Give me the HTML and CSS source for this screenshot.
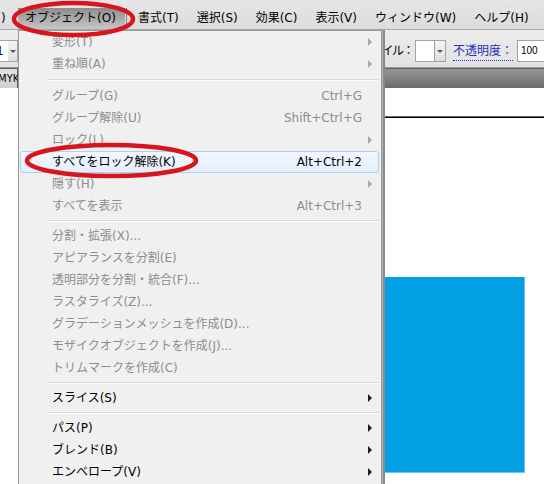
FILE: index.html
```html
<!DOCTYPE html>
<html lang="ja">
<head>
<meta charset="utf-8">
<title>オブジェクト メニュー</title>
<link rel="stylesheet" href="styles.css">
</head>
<body>
<div class="app">
  <div class="menubar">
    <span class="mb-item mb-cut">)</span>
    <span class="mb-item mb-active">オブジェクト(O)</span>
    <span class="mb-sep"></span>
    <span class="mb-item">書式(T)</span>
    <span class="mb-item">選択(S)</span>
    <span class="mb-item">効果(C)</span>
    <span class="mb-item">表示(V)</span>
    <span class="mb-item">ウィンドウ(W)</span>
    <span class="mb-item">ヘルプ(H)</span>
  </div>
  <div class="toolbar">
    <div class="tb-left">
      <span class="field field-cut">1</span>
      <span class="dd-btn"><i class="dd-arrow"></i></span>
    </div>
    <div class="tb-right">
      <span class="tb-label">スタイル：</span>
      <span class="field field-style"></span>
      <span class="dd-btn"><i class="dd-arrow"></i></span>
      <span class="tb-link">不透明度：</span>
      <span class="field field-num">100</span>
    </div>
  </div>
  <div class="tabbar">
    <span class="doc-tab">MYK</span>
  </div>
  <div class="canvas">
    <div class="artboard">
      <div class="shape"></div>
    </div>
  </div>
</div>

<div class="menu">
  <div class="row dis"><span class="lbl">変形(T)</span><i class="arr"></i></div>
  <div class="row dis"><span class="lbl">重ね順(A)</span><i class="arr"></i></div>
  <div class="sep sep-first"></div>
  <div class="row dis"><span class="lbl">グループ(G)</span><span class="sc">Ctrl+G</span></div>
  <div class="row dis"><span class="lbl">グループ解除(U)</span><span class="sc">Shift+Ctrl+G</span></div>
  <div class="row dis"><span class="lbl">ロック(L)</span><i class="arr"></i></div>
  <div class="row hot"><span class="lbl">すべてをロック解除(K)</span><span class="sc">Alt+Ctrl+2</span></div>
  <div class="row dis"><span class="lbl">隠す(H)</span><i class="arr"></i></div>
  <div class="row dis"><span class="lbl">すべてを表示</span><span class="sc">Alt+Ctrl+3</span></div>
  <div class="sep"></div>
  <div class="row dis"><span class="lbl">分割・拡張(X)...</span></div>
  <div class="row dis"><span class="lbl">アピアランスを分割(E)</span></div>
  <div class="row dis"><span class="lbl">透明部分を分割・統合(F)...</span></div>
  <div class="row dis"><span class="lbl">ラスタライズ(Z)...</span></div>
  <div class="row dis"><span class="lbl">グラデーションメッシュを作成(D)...</span></div>
  <div class="row dis"><span class="lbl">モザイクオブジェクトを作成(J)...</span></div>
  <div class="row dis"><span class="lbl">トリムマークを作成(C)</span></div>
  <div class="sep"></div>
  <div class="row"><span class="lbl">スライス(S)</span><i class="arr"></i></div>
  <div class="sep"></div>
  <div class="row"><span class="lbl">パス(P)</span><i class="arr"></i></div>
  <div class="row"><span class="lbl">ブレンド(B)</span><i class="arr"></i></div>
  <div class="row"><span class="lbl">エンベロープ(V)</span><i class="arr"></i></div>
</div>

<svg class="marks" width="544" height="484" viewBox="0 0 544 484" aria-hidden="true">
  <ellipse cx="73.5" cy="19" rx="59.5" ry="16" fill="none" stroke="#d8141d" stroke-width="4.5"/>
  <ellipse cx="111.5" cy="160.5" rx="84.5" ry="15.5" fill="none" stroke="#d8141d" stroke-width="4.5"/>
</svg>
</body>
</html>
```

FILE: styles.css
```css
* { box-sizing: border-box; }

html, body {
  margin: 0;
  padding: 0;
}

body {
  width: 544px;
  height: 484px;
  overflow: hidden;
  position: relative;
  font-family: "DejaVu Sans", "Noto Sans CJK JP", sans-serif;
  font-size: 12px;
  color: #000;
  background: #fff;
}

.app {
  display: flex;
  flex-direction: column;
  height: 484px;
}

/* ---------- menu bar ---------- */
.menubar {
  flex: 0 0 30px;
  display: flex;
  align-items: stretch;
  padding-top: 8px;
  background: linear-gradient(#e6e6e6, #dcdcdc);
  border-bottom: 1px solid #a8a8a8;
  white-space: nowrap;
  overflow: hidden;
}

.mb-item {
  display: flex;
  align-items: center;
  padding: 0 9px;
  line-height: 21px;
}

.mb-cut {
  flex: 0 0 18px;
  padding: 0 0 0 1px;
}

.mb-active {
  flex: 0 0 107px;
  padding: 0 0 0 7px;
  background: linear-gradient(#8d8d8d, #c6c6c6);
}

.mb-sep {
  flex: 0 0 1px;
  margin: 0 2px 0 1px;
  background: #7c7c7c;
}

/* ---------- control bar ---------- */
.toolbar {
  flex: 0 0 38px;
  display: flex;
  align-items: flex-start;
  padding-top: 10px;
  background: linear-gradient(#ececec, #e2e2e2);
  border-bottom: 1px solid #9a9a9a;
  overflow: hidden;
}

.tb-left,
.tb-right {
  display: flex;
  align-items: center;
  height: 22px;
  flex-shrink: 0;
}

.tb-right {
  margin-left: auto;
  margin-right: -20px;
}

.field {
  height: 22px;
  background: #fff;
  border: 1px solid #a3a3a3;
}

.field-cut {
  width: 8px;
  border-left: 0;
  border-right: 0;
  line-height: 20px;
  text-indent: -4px;
  overflow: hidden;
}

.field-style {
  width: 20px;
  margin-left: 2px;
}

.field-num {
  width: 47px;
  margin-left: 4px;
  padding-left: 3px;
  font-family: "Liberation Sans", sans-serif;
  font-size: 10px;
  line-height: 20px;
}

.dd-btn {
  width: 11px;
  height: 22px;
  display: flex;
  align-items: center;
  justify-content: center;
  background: linear-gradient(#f4f4f4, #dedede);
  border: 1px solid #a3a3a3;
  border-left: 0;
}

.tb-left .dd-btn {
  width: 10px;
}

.dd-arrow {
  width: 0;
  height: 0;
  border-top: 3px solid #555;
  border-left: 3px solid transparent;
  border-right: 3px solid transparent;
}

.tb-label {
  line-height: 22px;
  letter-spacing: -1.5px;
}

.tb-link {
  margin-left: 7px;
  color: #2630b8;
  line-height: 18px;
  border-bottom: 1px dotted #2630b8;
}

/* ---------- document tab bar ---------- */
.tabbar {
  flex: 0 0 20px;
  display: flex;
  background: linear-gradient(#969696, #6c6c6c);
  border-top: 1px solid #5d5d5d;
}

.doc-tab {
  width: 18px;
  overflow: hidden;
  background: linear-gradient(#e2e2e2, #d0d0d0);
  border-right: 1px solid #5a5a5a;
  font-size: 10px;
  line-height: 19px;
  text-indent: -2px;
  white-space: nowrap;
}

/* ---------- canvas ---------- */
.canvas {
  flex: 1 1 0;
  min-height: 0;
  background: #fff;
  overflow: hidden;
}

.artboard {
  margin: 29px 0 0 30px;
  border-top: 1px solid #000;
  box-shadow: 0 -1px 0 #6a6a6a;
  height: 360px;
}

.shape {
  width: 142px;
  height: 196px;
  margin: 159px 0 0 353px;
  background: #029fe4;
  border-right: 1px solid #6cc6f0;
  border-bottom: 1px solid #6cc6f0;
}

/* ---------- dropdown menu ---------- */
.menu {
  position: absolute;
  left: 18px;
  top: 30px;
  width: 364px;
  height: 454px;
  overflow: hidden;
  background: #f0f0f0;
  border: 1px solid #979797;
  border-bottom: 0;
  box-shadow: 1px 0 0 #b4b4b4, 3px 0 0 #8a8a8a;
}

.row {
  height: 22px;
  margin: 0 2px 0 1px;
  padding: 0 6px 0 31px;
  display: flex;
  align-items: center;
  border: 1px solid transparent;
  line-height: 20px;
  white-space: nowrap;
}

.row.dis {
  color: #8d8d8d;
}

.row.hot {
  border-color: #aecff7;
  border-radius: 3px;
  background: linear-gradient(#f3f8fe, #e4eefb);
}

.sc {
  margin-left: auto;
  margin-right: 10px;
}

.arr {
  margin-left: auto;
  width: 0;
  height: 0;
  border-left: 4px solid #1e1e1e;
  border-top: 4px solid transparent;
  border-bottom: 4px solid transparent;
}

.row.dis .arr {
  border-left-color: #a8a8a8;
}

.sep {
  height: 2px;
  margin: 3px 2px 3px 29px;
  border-top: 1px solid #d9d9d9;
  border-bottom: 1px solid #fcfcfc;
}

.sep-first {
  margin-top: 4px;
  margin-bottom: 4px;
}

/* ---------- annotation ellipses ---------- */
.marks {
  position: absolute;
  left: 0;
  top: 0;
  pointer-events: none;
}
```
